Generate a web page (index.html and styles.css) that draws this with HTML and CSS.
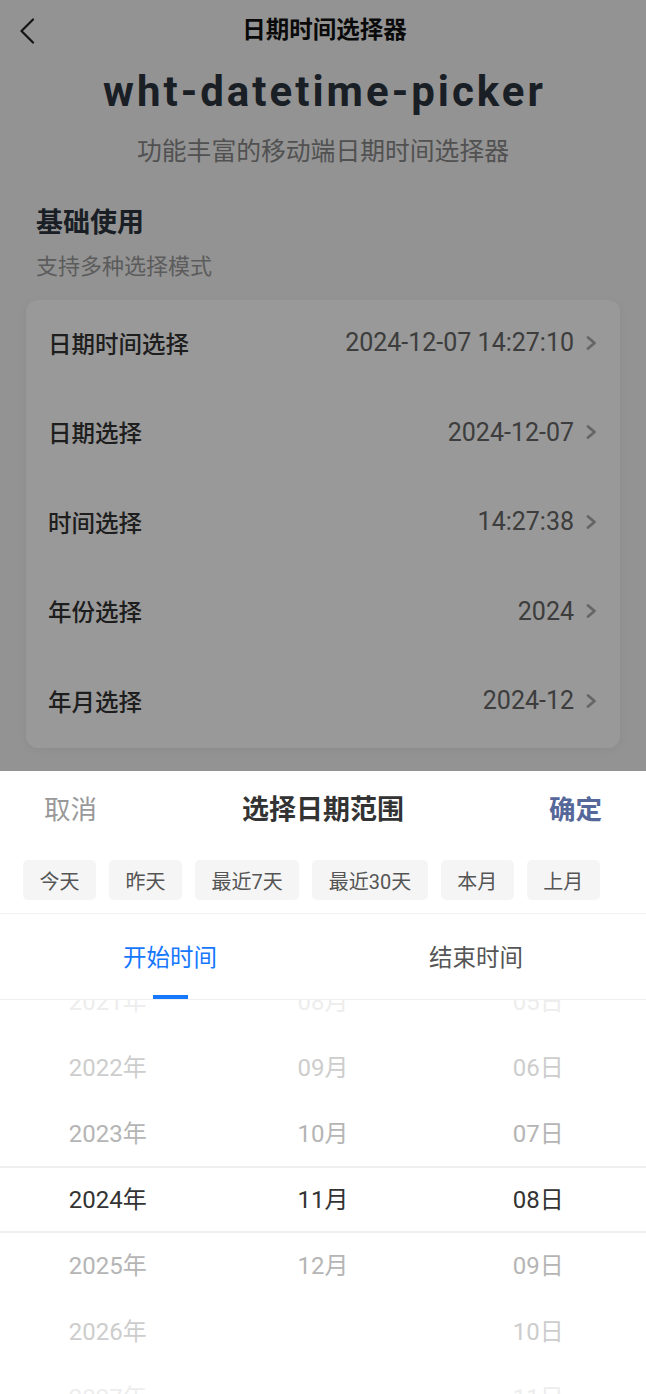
FILE: index.html
```html
<!DOCTYPE html>
<html lang="zh-CN">
<head>
<meta charset="utf-8">
<meta name="viewport" content="width=device-width, initial-scale=1">
<title>日期时间选择器</title>
<link rel="stylesheet" href="styles.css">
</head>
<body>
<div class="page">
  <header class="nav">
    <span class="nav-back">
      <svg width="16" height="26" viewBox="0 0 16 26"><path d="M14 1.5 L2.5 13 L14 24.5" fill="none" stroke="#222" stroke-width="2.2" stroke-linecap="round" stroke-linejoin="round"/></svg>
    </span>
    <h1 class="nav-title">日期时间选择器</h1>
    <span class="nav-spacer"></span>
  </header>

  <div class="hero">
    <div class="hero-title">wht-datetime-picker</div>
    <div class="hero-sub">功能丰富的移动端日期时间选择器</div>
  </div>

  <section class="section">
    <div class="section-head">
      <div class="section-title">基础使用</div>
      <div class="section-desc">支持多种选择模式</div>
    </div>
    <div class="card">
      <div class="row"><span class="row-label">日期时间选择</span><span class="row-value">2024-12-07 14:27:10</span><svg class="chev" width="12" height="16" viewBox="0 0 12 16"><path d="M3 2.5 L9.5 8 L3 13.5" fill="none" stroke="#aaa" stroke-width="2.8" stroke-linecap="round" stroke-linejoin="round"/></svg></div>
      <div class="row"><span class="row-label">日期选择</span><span class="row-value">2024-12-07</span><svg class="chev" width="12" height="16" viewBox="0 0 12 16"><path d="M3 2.5 L9.5 8 L3 13.5" fill="none" stroke="#aaa" stroke-width="2.8" stroke-linecap="round" stroke-linejoin="round"/></svg></div>
      <div class="row"><span class="row-label">时间选择</span><span class="row-value">14:27:38</span><svg class="chev" width="12" height="16" viewBox="0 0 12 16"><path d="M3 2.5 L9.5 8 L3 13.5" fill="none" stroke="#aaa" stroke-width="2.8" stroke-linecap="round" stroke-linejoin="round"/></svg></div>
      <div class="row"><span class="row-label">年份选择</span><span class="row-value">2024</span><svg class="chev" width="12" height="16" viewBox="0 0 12 16"><path d="M3 2.5 L9.5 8 L3 13.5" fill="none" stroke="#aaa" stroke-width="2.8" stroke-linecap="round" stroke-linejoin="round"/></svg></div>
      <div class="row"><span class="row-label">年月选择</span><span class="row-value">2024-12</span><svg class="chev" width="12" height="16" viewBox="0 0 12 16"><path d="M3 2.5 L9.5 8 L3 13.5" fill="none" stroke="#aaa" stroke-width="2.8" stroke-linecap="round" stroke-linejoin="round"/></svg></div>
    </div>
  </section>
</div>

<div class="mask"></div>

<div class="sheet">
  <div class="sheet-head">
    <span class="btn-cancel">取消</span>
    <span class="sheet-title">选择日期范围</span>
    <span class="btn-ok">确定</span>
  </div>
  <div class="quick">
    <span class="chip">今天</span>
    <span class="chip">昨天</span>
    <span class="chip">最近7天</span>
    <span class="chip">最近30天</span>
    <span class="chip">本月</span>
    <span class="chip">上月</span>
  </div>
  <div class="tabs">
    <div class="tab active"><span class="tab-text">开始时间</span></div>
    <div class="tab"><span class="tab-text">结束时间</span></div>
  </div>
  <div class="picker">
    <div class="picker-band"></div>
    <div class="cols">
      <div class="col">
        <div class="item d3">2021年</div>
        <div class="item d2">2022年</div>
        <div class="item d1">2023年</div>
        <div class="item sel">2024年</div>
        <div class="item d1">2025年</div>
        <div class="item d2">2026年</div>
        <div class="item d3">2027年</div>
      </div>
      <div class="col">
        <div class="item d3">08月</div>
        <div class="item d2">09月</div>
        <div class="item d1">10月</div>
        <div class="item sel">11月</div>
        <div class="item d1">12月</div>
      </div>
      <div class="col">
        <div class="item d3">05日</div>
        <div class="item d2">06日</div>
        <div class="item d1">07日</div>
        <div class="item sel">08日</div>
        <div class="item d1">09日</div>
        <div class="item d2">10日</div>
        <div class="item d3">11日</div>
      </div>
    </div>
  </div>
</div>
</body>
</html>
```
FILE: styles.css
```css
* { box-sizing: border-box; margin: 0; padding: 0; }
html, body {
  width: 646px;
  height: 1394px;
  overflow: hidden;
}
body {
  background: #f5f5f5;
  font-family: Roboto, "Noto Sans CJK SC", sans-serif;
  color: #333;
  position: relative;
}

.nav {
  height: 62px;
  display: flex;
  align-items: center;
  justify-content: space-between;
  padding: 0 16px 0 19px;
}
.nav-back { width: 40px; display: flex; align-items: center; }
.nav-spacer { width: 40px; }
.nav-title {
  font-size: 23.5px;
  font-weight: 700;
  color: #111;
  line-height: 1;
}

.hero { text-align: center; }
.hero-title {
  margin-top: 4px;
  font-size: 42px;
  line-height: 52px;
  font-weight: 700;
  color: #2c3440;
  letter-spacing: 3px;
  padding-left: 3px;
}
.hero-sub {
  margin-top: 17px;
  font-size: 24.8px;
  line-height: 34px;
  color: #888;
}

.section { padding: 0 26px; }
.section-head { padding-left: 10px; }
.section-title {
  margin-top: 36px;
  font-size: 27px;
  line-height: 36px;
  font-weight: 700;
  color: #2c3440;
}
.section-desc {
  margin-top: 11px;
  font-size: 22px;
  line-height: 30px;
  color: #999;
}
.card {
  margin-top: 18px;
  background: #fff;
  border-radius: 12px;
  box-shadow: 0 2px 10px rgba(0,0,0,0.05);
}
.row {
  height: 89.5px;
  display: flex;
  align-items: center;
  padding: 0 23px 4px 22px;
}
.row-label {
  flex: 1;
  font-size: 23.5px;
  font-weight: 500;
  color: #333;
}
.row-value {
  font-size: 25px;
  color: #666;
}
.chev {
  margin-left: 11px;
  flex: none;
}

.mask {
  position: absolute;
  inset: 0;
  background: rgba(0,0,0,0.4);
}

.sheet {
  position: absolute;
  left: 0;
  right: 0;
  top: 771px;
  bottom: 0;
  background: #fff;
  display: flex;
  flex-direction: column;
}
.sheet-head {
  height: 76px;
  display: flex;
  align-items: center;
  justify-content: space-between;
  padding: 0 44px 4px;
  font-size: 26.5px;
}
.btn-cancel { color: #999; }
.sheet-title { font-weight: 700; color: #333; font-size: 27px; }
.btn-ok { color: #56679a; font-weight: 700; }

.quick {
  display: flex;
  gap: 13px;
  padding: 13px 23px;
  border-bottom: 1px solid #f0f0f0;
}
.chip {
  height: 40px;
  padding: 0 16.5px;
  display: flex;
  align-items: center;
  background: #f5f5f5;
  border-radius: 5px;
  font-size: 20px;
  color: #555;
}

.tabs {
  height: 86px;
  display: flex;
  padding: 0 17px;
  border-bottom: 1px solid #f0f0f0;
}
.tab {
  flex: 1;
  display: flex;
  align-items: center;
  justify-content: center;
  position: relative;
  padding-bottom: 2px;
}
.tab-text {
  font-size: 23.5px;
  color: #555;
}
.tab.active .tab-text { color: #1677ff; }
.tab.active::after {
  content: "";
  position: absolute;
  left: 50%;
  bottom: 0;
  width: 35px;
  height: 4px;
  margin-left: -17.5px;
  background: #1677ff;
}

.picker {
  flex: 1;
  position: relative;
  overflow: hidden;
}
.picker-band {
  position: absolute;
  left: 0;
  right: 0;
  top: 166px;
  height: 67px;
  border-top: 2px solid #f0f0f0;
  border-bottom: 2px solid #f0f0f0;
}
.cols {
  display: flex;
  margin-top: -34px;
}
.col { flex: 1; }
.item {
  height: 66px;
  display: flex;
  align-items: center;
  justify-content: center;
  font-size: 24px;
  color: #333;
}
.item.d1 { color: #b5b5b5; }
.item.d2 { color: #cdcdcd; }
.item.d3 { color: #ededed; }
```
